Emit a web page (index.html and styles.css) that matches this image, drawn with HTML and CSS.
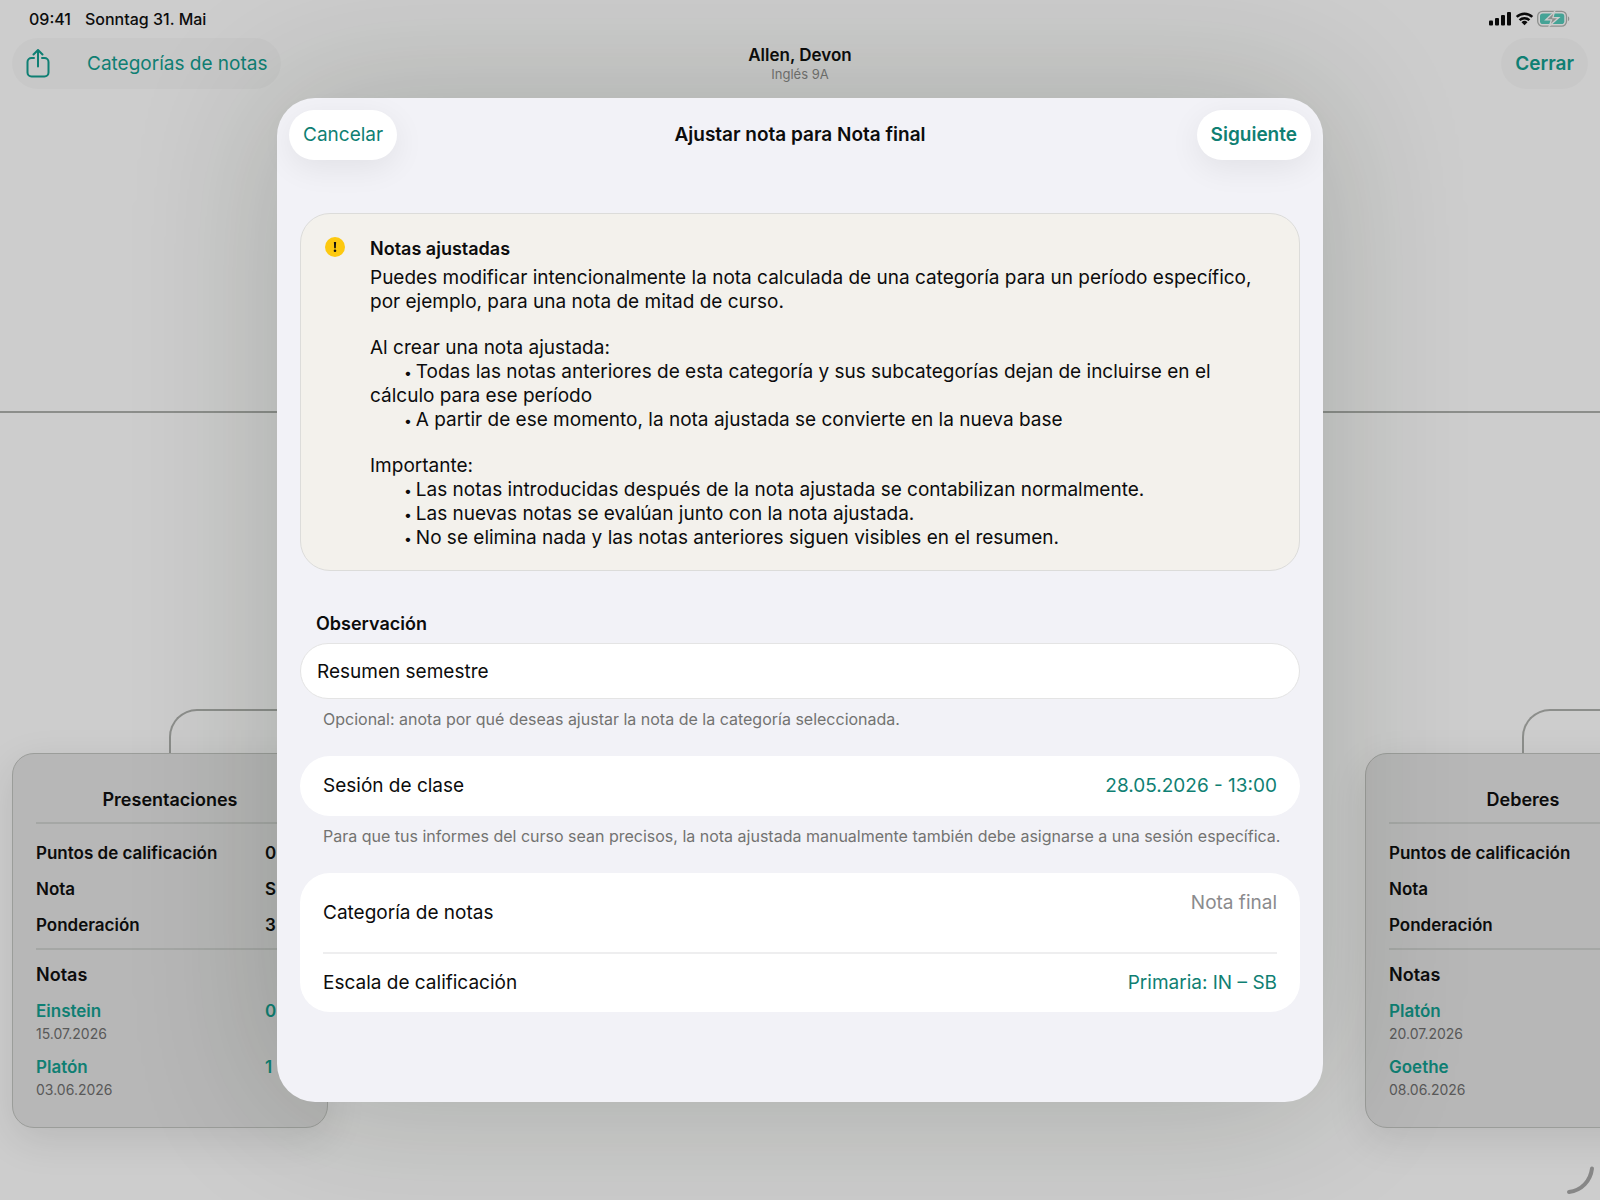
FILE: index.html
```html
<!DOCTYPE html>
<html lang="es">
<head>
<meta charset="utf-8">
<meta name="viewport" content="width=device-width, initial-scale=1">
<title>Ajustar nota para Nota final</title>
<link rel="stylesheet" href="styles.css">
</head>
<body>
<div class="screen">
  <div class="status-bar">
    <div class="status-time"><span>09:41</span><span>Sonntag 31. Mai</span></div>
    <svg class="status-icons" width="82" height="18" viewBox="0 0 82 18" aria-hidden="true">
      <g fill="#0a0a0a">
        <rect x="0" y="10.500" width="4" height="5" rx="1"/>
        <rect x="6" y="8" width="4" height="7.500" rx="1"/>
        <rect x="12" y="5" width="4" height="10.500" rx="1"/>
        <rect x="18" y="2" width="4" height="13.500" rx="1"/>
        <path d="M35.500 15.200l-3-3a4.300 4.300 0 0 1 6 0z"/>
      </g>
      <g fill="none" stroke="#0a0a0a" stroke-width="2.500">
        <path d="M30.600 10.200a7 7 0 0 1 9.800 0"/>
        <path d="M27.700 6.900a11.200 11.200 0 0 1 15.600 0"/>
      </g>
      <rect x="48.700" y="1.400" width="28.800" height="14.700" rx="4.800" fill="none" stroke="#8e908e" stroke-width="1.300"/>
      <rect x="51" y="3.500" width="24.300" height="10.500" rx="2.800" fill="#45a396"/>
      <path d="M79 6.500c1.700.5 1.700 4 0 4.500z" fill="#8e908e"/>
      <path d="M65.500 1.800L56.800 9.800h5.700L60.300 16 69.800 7.600h-5.900z" fill="#8e908e" stroke="#cdcdcd" stroke-width="1.300"/>
    </svg>
  </div>

  <header class="nav-bar">
    <div class="nav-side">
      <div class="nav-pill">
        <button class="icon-button" type="button" aria-label="Compartir">
          <svg width="24" height="30" viewBox="0 0 24 30" fill="none" stroke="currentColor" stroke-width="2" stroke-linecap="round" stroke-linejoin="round" aria-hidden="true">
            <path d="M8 9H5.500A4 4 0 0 0 1.500 13V23.500a4 4 0 0 0 4 4h13a4 4 0 0 0 4-4V13a4 4 0 0 0-4-4H16"/>
            <path d="M12 17.500V1.300M7.500 5.500L12 1 16.500 5.500"/>
          </svg>
        </button>
        <button class="text-button" type="button">Categorías de notas</button>
      </div>
    </div>
    <div class="nav-title">
      <h1>Allen, Devon</h1>
      <p>Inglés 9A</p>
    </div>
    <div class="nav-side nav-side-end">
      <div class="nav-pill"><button class="text-button strong" type="button">Cerrar</button></div>
    </div>
  </header>

  <main class="canvas">
    <div class="trunk"></div>
    <div class="branch branch-left"></div>
    <div class="branch branch-right"></div>

    <section class="node node-left">
      <h2>Presentaciones</h2>
      <dl class="facts">
        <div><dt>Puntos de calificación</dt><dd>0</dd></div>
        <div><dt>Nota</dt><dd>S</dd></div>
        <div><dt>Ponderación</dt><dd>3</dd></div>
      </dl>
      <h3>Notas</h3>
      <ul class="grades">
        <li><a href="#einstein"><span>Einstein</span><span>0</span></a><time>15.07.2026</time></li>
        <li><a href="#platon"><span>Platón</span><span>1</span></a><time>03.06.2026</time></li>
      </ul>
    </section>

    <section class="node node-right">
      <h2>Deberes</h2>
      <dl class="facts">
        <div><dt>Puntos de calificación</dt></div>
        <div><dt>Nota</dt></div>
        <div><dt>Ponderación</dt></div>
      </dl>
      <h3>Notas</h3>
      <ul class="grades">
        <li><a href="#platon-2"><span>Platón</span></a><time>20.07.2026</time></li>
        <li><a href="#goethe"><span>Goethe</span></a><time>08.06.2026</time></li>
      </ul>
    </section>
  </main>

  <svg class="resize-handle" width="30" height="30" viewBox="0 0 30 30" fill="none" stroke="#878787" stroke-width="4" stroke-linecap="round" aria-hidden="true">
    <path d="M27 3.500C25.500 16 16.500 25.500 4 27"/>
  </svg>

  <div class="overlay">
    <form class="sheet" role="dialog" aria-labelledby="sheet-title">
      <div class="sheet-bar">
        <div class="nav-side"><button class="glass-button" type="button">Cancelar</button></div>
        <h2 id="sheet-title">Ajustar nota para Nota final</h2>
        <div class="nav-side nav-side-end"><button class="glass-button strong" type="button">Siguiente</button></div>
      </div>

      <div class="sheet-body">
        <section class="notice">
          <svg class="notice-icon" width="20" height="20" viewBox="0 0 20 20" aria-hidden="true">
            <circle cx="10" cy="10" r="10" fill="#fdc90f"/>
            <path d="M8.900 5h2.200l-.3 6.200H9.200z" fill="#111"/>
            <circle cx="10" cy="13.700" r="1.300" fill="#111"/>
          </svg>
          <div class="notice-text">
            <h3>Notas ajustadas</h3>
            <div class="block">
              <p>Puedes modificar intencionalmente la nota calculada de una categoría para un período específico, por ejemplo, para una nota de mitad de curso.</p>
            </div>
            <div class="block">
              <p>Al crear una nota ajustada:</p>
              <p class="point">Todas las notas anteriores de esta categoría y sus subcategorías dejan de incluirse en el cálculo para ese período</p>
              <p class="point">A partir de ese momento, la nota ajustada se convierte en la nueva base</p>
            </div>
            <div class="block">
              <p>Importante:</p>
              <p class="point">Las notas introducidas después de la nota ajustada se contabilizan normalmente.</p>
              <p class="point">Las nuevas notas se evalúan junto con la nota ajustada.</p>
              <p class="point">No se elimina nada y las notas anteriores siguen visibles en el resumen.</p>
            </div>
          </div>
        </section>

        <label class="field-label" for="note">Observación</label>
        <input class="field" id="note" type="text" value="Resumen semestre">
        <p class="hint">Opcional: anota por qué deseas ajustar la nota de la categoría seleccionada.</p>

        <div class="group">
          <div class="row">
            <span>Sesión de clase</span>
            <button class="value-button" type="button">28.05.2026 - 13:00</button>
          </div>
        </div>
        <p class="hint">Para que tus informes del curso sean precisos, la nota ajustada manualmente también debe asignarse a una sesión específica.</p>

        <div class="group">
          <div class="row row-tall">
            <span>Categoría de notas</span>
            <span class="value-muted">Nota final</span>
          </div>
          <div class="row">
            <span>Escala de calificación</span>
            <button class="value-button" type="button">Primaria: IN – SB</button>
          </div>
        </div>
      </div>
    </form>
  </div>
</div>
</body>
</html>
```
FILE: styles.css
```css
:root {
  --teal: #0f7f73;
  --ink: #0c0c0c;
  --grey: #737371;
  --line: #8c8e8b;
}

* { box-sizing: border-box; }

body {
  margin: 0;
  font-family: Inter, "Liberation Sans", sans-serif;
  font-size: 19px;
  line-height: 24px;
  color: var(--ink);
  background: #cdcdcd;
}

h1, h2, h3, p, dl, dd, ul { margin: 0; padding: 0; }
h1, h2, h3 { font-size: inherit; font-weight: 600; }
ul { list-style: none; }

button {
  border: 0;
  padding: 0;
  background: none;
  font: inherit;
  color: var(--teal);
}

.strong { font-weight: 600; }

.screen {
  position: relative;
  display: flex;
  flex-direction: column;
  min-height: 100vh;
  overflow: hidden;
}

/* status bar and navigation */
.status-bar {
  display: flex;
  justify-content: space-between;
  align-items: center;
  height: 38px;
  padding: 0 29px;
  font-size: 16px;
  font-weight: 500;
}
.status-time { display: flex; gap: 14px; }

.nav-bar {
  display: flex;
  align-items: flex-start;
  padding: 0 12px;
}
.nav-side { display: flex; flex: 1; }
.nav-side-end { justify-content: flex-end; }
.nav-pill {
  display: flex;
  align-items: center;
  gap: 37px;
  height: 51px;
  padding: 0 14px;
  border-radius: 26px;
  background: rgba(0, 0, 0, 0.02);
}
.icon-button { display: flex; }
.nav-title { padding-top: 5px; text-align: center; }
.nav-title h1 { font-size: 17px; line-height: 24px; }
.nav-title p { font-size: 13px; line-height: 14px; color: var(--grey); }

/* category tree */
.canvas { flex: 1; }
.trunk {
  position: absolute;
  top: 411px;
  left: 0;
  right: 0;
  height: 2px;
  background: var(--line);
}
.branch {
  position: absolute;
  top: 709px;
  width: 200px;
  height: 45px;
  border: solid var(--line);
  border-width: 2px 0 0 2px;
  border-top-left-radius: 28px;
}
.branch-left { left: 169px; }
.branch-right { left: 1522px; }

.node {
  position: absolute;
  top: 753px;
  width: 316px;
  padding: 34px 23px 26px;
  border: 1px solid #9b9d9a;
  border-radius: 22px;
  background: #b7b7b7;
  box-shadow: 0 12px 40px rgba(0, 0, 0, 0.1);
  font-size: 17px;
  font-weight: 600;
}
.node-left { left: 12px; }
.node-right { left: 1365px; }
.node h2 {
  padding-bottom: 10px;
  border-bottom: 2px solid #a5a7a5;
  font-size: 18px;
  text-align: center;
}
.node h3 { padding: 13px 0 12px; font-size: 18px; }
.facts {
  display: grid;
  gap: 12px;
  padding: 17px 0 11px;
  border-bottom: 2px solid #a5a7a5;
}
.facts div, .grades a { display: grid; grid-template-columns: 1fr 39px; }
.facts dd { margin: 0; }
.grades { display: grid; gap: 10px; }
.grades a { color: var(--teal); text-decoration: none; }
.grades time {
  display: block;
  font-size: 14px;
  font-weight: 400;
  line-height: 22px;
  color: #595959;
}

.resize-handle { position: absolute; right: 5px; bottom: 5px; }

/* sheet */
.overlay {
  position: absolute;
  inset: 0;
  display: flex;
  align-items: center;
  justify-content: center;
}
.sheet {
  width: 100%;
  max-width: 1046px;
  padding: 12px 12px 90px;
  border-radius: 38px;
  background: #f2f2f7;
  box-shadow: 0 0 150px rgba(20, 35, 15, 0.2);
}
.sheet-bar { display: flex; align-items: center; }
.glass-button {
  height: 50px;
  padding: 0 14px;
  border-radius: 25px;
  background: #fff;
  box-shadow: 0 8px 32px rgba(0, 20, 20, 0.07);
}
.sheet-body {
  display: flex;
  flex-direction: column;
  padding: 53px 11px 0;
}

.notice {
  display: flex;
  gap: 25px;
  padding: 23px 40px 20px 24px;
  border: 1px solid #dcdcda;
  border-radius: 30px;
  background: #f3f1ec;
}
.notice-icon { flex: none; }
.notice h3 { margin-bottom: 5px; font-size: 18px; }
.block + .block { margin-top: 22px; }
.point { text-indent: 34px; }
.point::before { content: "• "; font-size: 14px; line-height: 1; }

.field-label { margin: 41px 16px 7px; font-size: 18px; font-weight: 600; }
.field {
  height: 56px;
  padding: 0 16px;
  border: 1px solid #e4e4e4;
  border-radius: 28px;
  background: #fff;
  font: inherit;
  color: inherit;
}
.hint {
  margin: 10px 0 27px;
  padding: 0 12px 0 23px;
  font-size: 16px;
  line-height: 20px;
  color: var(--grey);
}
.group {
  padding: 0 23px;
  border-radius: 30px;
  background: #fff;
}
.row {
  display: flex;
  align-items: center;
  justify-content: space-between;
  min-height: 60px;
}
.row + .row { border-top: 2px solid #eeeeef; }
.row-tall { min-height: 79px; }
.value-muted { padding-bottom: 20px; color: #8b8b8d; }
```
